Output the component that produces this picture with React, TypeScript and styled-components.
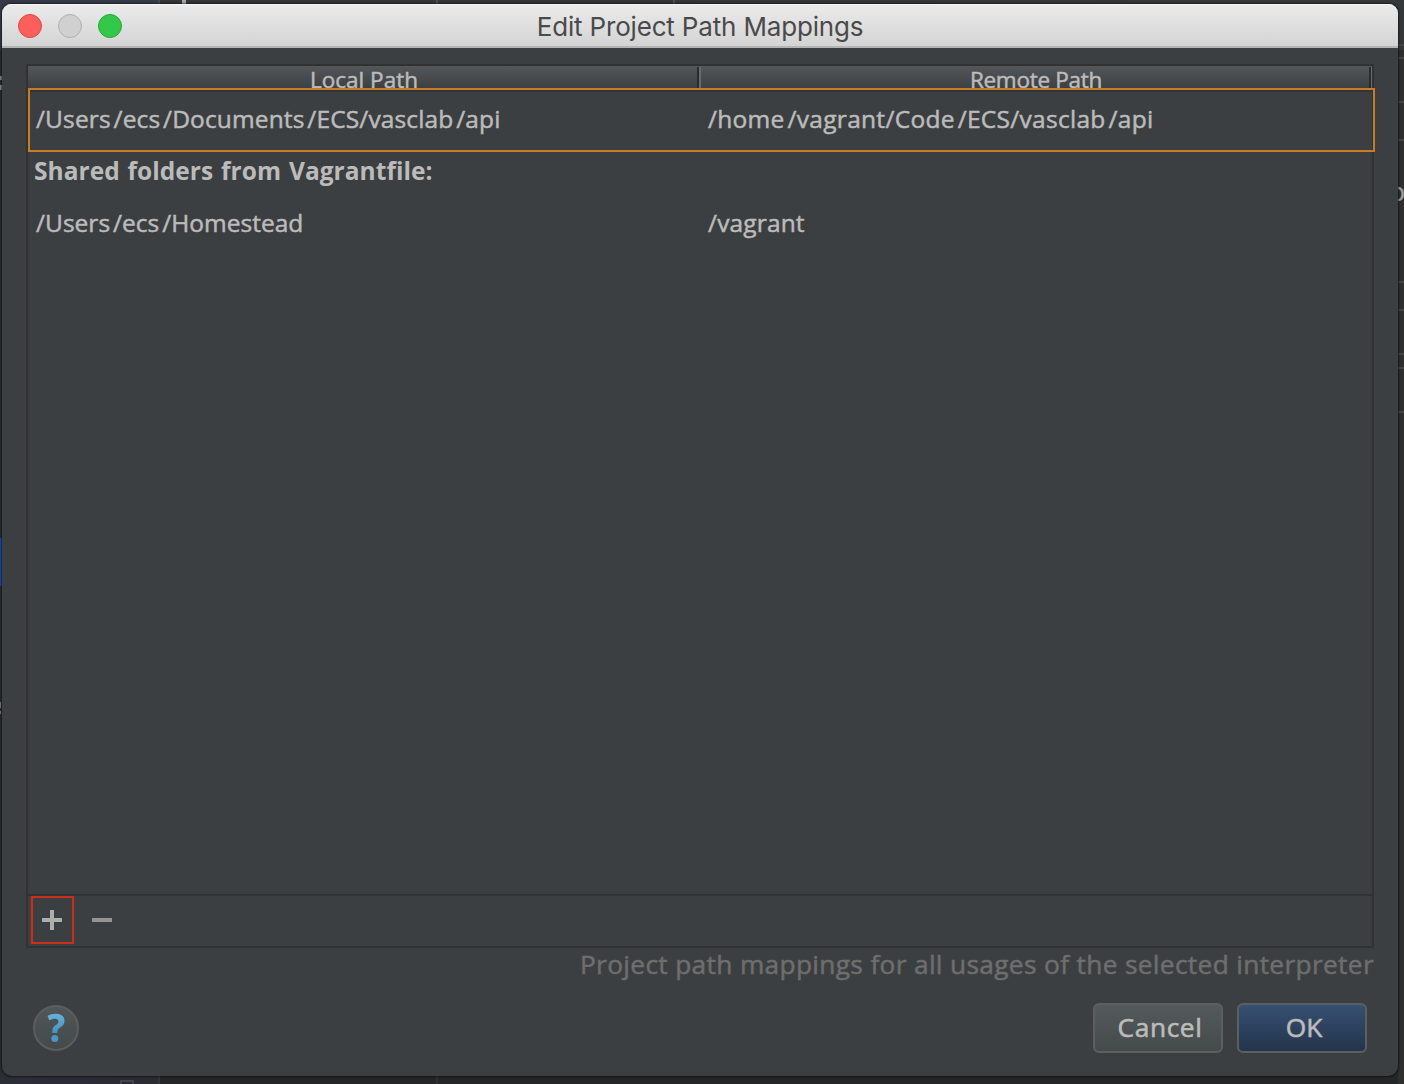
import React from "react";
import styled, { createGlobalStyle } from "styled-components";

const ui = `"Open Sans", "Noto Sans", sans-serif`;

const GlobalStyle = createGlobalStyle`
  *, *::before, *::after { box-sizing: border-box; }
  html, body { margin: 0; height: 100%; overflow: hidden; background: #27282a; }
  button { font: inherit; margin: 0; padding: 0; }
`;

const Desktop = styled.div`
  position: relative;
  width: 1404px;
  height: 1084px;
  padding: 4px 6px 8px 2px;
  overflow: hidden;
  background: linear-gradient(90deg, #2b2d37 0, #2a2b33 158px, #252628 160px, #252627 1398px, #2f2f2f 1398px);
`;

const TopStrip = styled.div`
  position: absolute;
  inset: 0 0 auto 0;
  height: 50px;
  background: linear-gradient(90deg, #363a46 0, #373b47 158px, #343638 160px, #34383a 1404px);
`;

const Fragment = styled.i<{ $x: number; $y: number; $w: number; $h: number; $color: string }>`
  position: absolute;
  left: ${(p) => p.$x}px;
  top: ${(p) => p.$y}px;
  width: ${(p) => p.$w}px;
  height: ${(p) => p.$h}px;
  background: ${(p) => p.$color};
`;

const Outline = styled.i`
  position: absolute;
  left: 120px;
  top: 1080px;
  width: 14px;
  height: 14px;
  border: 2px solid #42454d;
`;

const ClippedGlyph = styled.span<{ $x: number; $y: number }>`
  position: absolute;
  left: ${(p) => p.$x}px;
  top: ${(p) => p.$y}px;
  font: 25px/30px ${ui};
  -webkit-text-stroke: 0.4px currentColor;
  color: #a0a0a0;
`;

const Window = styled.section`
  position: relative;
  display: flex;
  flex-direction: column;
  height: 1072px;
  border-radius: 9px 9px 10px 10px;
  background: #3c3f41;
  box-shadow: 0 0 2px 1px rgba(0, 0, 0, 0.5);
  overflow: hidden;
`;

const TitleBar = styled.header`
  display: grid;
  grid-template-columns: 1fr auto 1fr;
  align-items: center;
  height: 44px;
  padding: 0 16px;
  background: linear-gradient(#ebebeb, #d4d4d4);
  border-bottom: 2px solid #b4b6b5;
  box-shadow: inset 0 1px #f7f7f7;
`;

const Lights = styled.div`
  display: flex;
  gap: 16px;
  padding-top: 2px;
`;

const Light = styled.span<{ $fill: string; $edge: string }>`
  width: 24px;
  height: 24px;
  border-radius: 50%;
  background: ${(p) => p.$fill};
  border: 1px solid ${(p) => p.$edge};
`;

const Title = styled.h1`
  margin: 0;
  padding-top: 3px;
  font: 400 26px/38px Inter, sans-serif;
  letter-spacing: -0.17px;
  color: #4a4a4a;
`;

const Content = styled.div`
  display: flex;
  flex-direction: column;
  padding: 16px 24px 0;
`;

const Panel = styled.div`
  display: flex;
  flex-direction: column;
  height: 884px;
  border: 2px solid #323232;
`;

const HeaderRow = styled.div`
  display: grid;
  grid-template-columns: 673px 671px;
  height: 22px;
`;

const HeaderCell = styled.div<{ $ls: number; $edge?: number }>`
  height: 22px;
  text-align: center;
  padding-right: 1px;
  font: 400 22.5px/28px ${ui};
  -webkit-text-stroke: 0.5px currentColor;
  letter-spacing: ${(p) => p.$ls}px;
  color: #bbbbbb;
  background: linear-gradient(90deg, #292b2c 2px, #686b6d 2px) right ${(p) => p.$edge ?? 0}px top 1px / 4px 100% no-repeat,
    linear-gradient(#53575a, #3d4042);
`;

const Row = styled.div<{ $selected?: boolean }>`
  display: grid;
  grid-template-columns: 672px 1fr;
  align-items: center;
  height: ${(p) => (p.$selected ? 64 : 52)}px;
  width: ${(p) => (p.$selected ? 1347 : 1344)}px;
  padding: 0 6px 2px ${(p) => (p.$selected ? 6 : 8)}px;
  position: relative;
  border: ${(p) => (p.$selected ? "2px solid #c87d24" : "0")};
  box-shadow: ${(p) => (p.$selected ? "inset 0 2px #323435" : "none")};
`;

const PathText = styled.span<{ $ls: number }>`
  font: 400 24.5px/32px ${ui};
  -webkit-text-stroke: 0.5px currentColor;
  letter-spacing: ${(p) => p.$ls}px;
  white-space: pre;
  color: #bbbbbb;
`;

const LooseSlash = styled.span`
  margin-left: 2.9px;
`;

const GroupLabel = styled.div`
  height: 46px;
  padding-left: 6px;
  font: 700 24.5px/38px ${ui};
  letter-spacing: 0.03px;
  word-spacing: 1.5px;
  white-space: pre;
  color: #bbbbbb;
`;

const Toolbar = styled.div`
  display: flex;
  align-items: flex-start;
  gap: 7px;
  height: 52px;
  margin-top: auto;
  padding-left: 3px;
  border-top: 2px solid #323232;
`;

const ToolButton = styled.button<{ $marked?: boolean }>`
  display: flex;
  align-items: center;
  width: 43px;
  height: 48px;
  padding-left: 9px;
  border: 2px solid ${(p) => (p.$marked ? "#cc2d1c" : "transparent")};
  background: none;
`;

const Caption = styled.p`
  margin: 0;
  height: 55px;
  text-align: right;
  font: 400 26.3px/32px ${ui};
  -webkit-text-stroke: 0.5px currentColor;
  letter-spacing: 0.33px;
  white-space: pre;
  color: #6e6e6e;
`;

const Footer = styled.footer`
  display: flex;
  align-items: center;
  gap: 14px;
  height: 50px;
  padding: 0 7px;
`;

const Help = styled.button`
  display: grid;
  place-items: center;
  width: 46px;
  height: 46px;
  margin-right: auto;
  border-radius: 50%;
  border: 2px solid #5b5d5e;
  background: linear-gradient(#515658, #444949);
`;

const PushButton = styled.button<{ $primary?: boolean }>`
  width: 130px;
  height: 50px;
  padding: 0 0 1px 4px;
  border-radius: 6px;
  border: 2px solid #5c5f60;
  background: ${(p) => (p.$primary ? "linear-gradient(#365072, #24344c)" : "linear-gradient(#54595b, #454a4b)")};
  font: 400 26.3px/45px ${ui};
  -webkit-text-stroke: 0.6px currentColor;
  letter-spacing: ${(p) => (p.$primary ? 0 : 0.6)}px;
  color: #bbbbbb;
`;

// Slashes that follow a lowercase e, s or b sit slightly apart from the letter.
function Path({ ls, children }: { ls: number; children: string }) {
  return (
    <PathText $ls={ls}>
      {children.split(/(?<=[a-su-z])(\/)/).map((part, i) =>
        i % 2 ? <LooseSlash key={i}>{part}</LooseSlash> : part
      )}
    </PathText>
  );
}

const lines = [44, 57, 101, 139, 281, 309, 353, 367, 411];

export default function App() {
  return (
    <>
      <GlobalStyle />
      <Desktop>
        <TopStrip />
        {lines.map((y) => (
          <Fragment key={y} $x={1398} $y={y} $w={6} $h={2} $color="#454545" />
        ))}
        <Fragment $x={158} $y={0} $w={2} $h={4} $color="#4b4b4d" />
        <Fragment $x={182} $y={0} $w={4} $h={4} $color="#a9a9a9" />
        <Fragment $x={436} $y={0} $w={2} $h={4} $color="#505050" />
        <Fragment $x={673} $y={0} $w={2} $h={4} $color="#505050" />
        <Fragment $x={0} $y={76} $w={2} $h={4} $color="#8a8a8a" />
        <Fragment $x={0} $y={85} $w={2} $h={5} $color="#8a8a8a" />
        <Fragment $x={0} $y={538} $w={2} $h={48} $color="#214a9c" />
        <Fragment $x={0} $y={702} $w={1} $h={6} $color="#8d7c64" />
        <Fragment $x={0} $y={711} $w={1} $h={3} $color="#8d7c64" />
        <Fragment $x={158} $y={1076} $w={2} $h={8} $color="#353535" />
        <Fragment $x={436} $y={1076} $w={2} $h={8} $color="#303030" />
        <Outline />
        <ClippedGlyph $x={1390} $y={176}>o</ClippedGlyph>
        <Window>
          <TitleBar>
            <Lights>
              <Light $fill="#fc605c" $edge="#e04743" />
              <Light $fill="#d0d0d0" $edge="#b0b0b0" />
              <Light $fill="#34c84a" $edge="#24a935" />
            </Lights>
            <Title>Edit Project Path Mappings</Title>
          </TitleBar>
          <Content>
            <Panel>
              <HeaderRow>
                <HeaderCell $ls={0}>Local Path</HeaderCell>
                <HeaderCell $ls={-0.28} $edge={-1}>Remote Path</HeaderCell>
              </HeaderRow>
              <Row $selected>
                <Path ls={0.12}>/Users/ecs/Documents/ECS/vasclab/api</Path>
                <Path ls={0.29}>/home/vagrant/Code/ECS/vasclab/api</Path>
              </Row>
              <GroupLabel>Shared folders from Vagrantfile:</GroupLabel>
              <Row>
                <Path ls={0.02}>/Users/ecs/Homestead</Path>
                <Path ls={0.15}>/vagrant</Path>
              </Row>
              <Toolbar>
                <ToolButton $marked aria-label="Add">
                  <svg width="20" height="20"><path d="M8 0h4v8h8v4h-8v8H8v-8H0V8h8z" fill="#adadad" /></svg>
                </ToolButton>
                <ToolButton aria-label="Remove">
                  <svg width="20" height="20"><path d="M0 8h20v4H0z" fill="#949494" /></svg>
                </ToolButton>
              </Toolbar>
            </Panel>
            <Caption>Project path mappings for all usages of the selected interpreter</Caption>
            <Footer>
              <Help aria-label="Help">
                <svg width="20" height="30" viewBox="0 0 20 30">
                  <defs>
                    <linearGradient id="q" x1="0" y1="0" x2="0" y2="1">
                      <stop offset="0" stopColor="#64b2dc" />
                      <stop offset="1" stopColor="#4593c6" />
                    </linearGradient>
                  </defs>
                  <path d="M1.500 2.800C4 1.500 6.500 .7 9.500 .7c5.500 0 9 2.500 9 7 0 3.200-1.700 5-4.500 7C11.800 16.200 11.300 17.200 11.300 19.500v.5H6.300v-1c0-3.400 1-5.100 3.600-6.900 1.900-1.400 2.500-2.300 2.500-3.700 0-1.800-1.300-2.600-3.400-2.600-1.900 0-3.600.5-5.700 1.800z" fill="url(#q)" />
                  <circle cx="8.800" cy="25.500" r="3.500" fill="#4896c8" />
                </svg>
              </Help>
              <PushButton>Cancel</PushButton>
              <PushButton $primary>OK</PushButton>
            </Footer>
          </Content>
        </Window>
      </Desktop>
    </>
  );
}
